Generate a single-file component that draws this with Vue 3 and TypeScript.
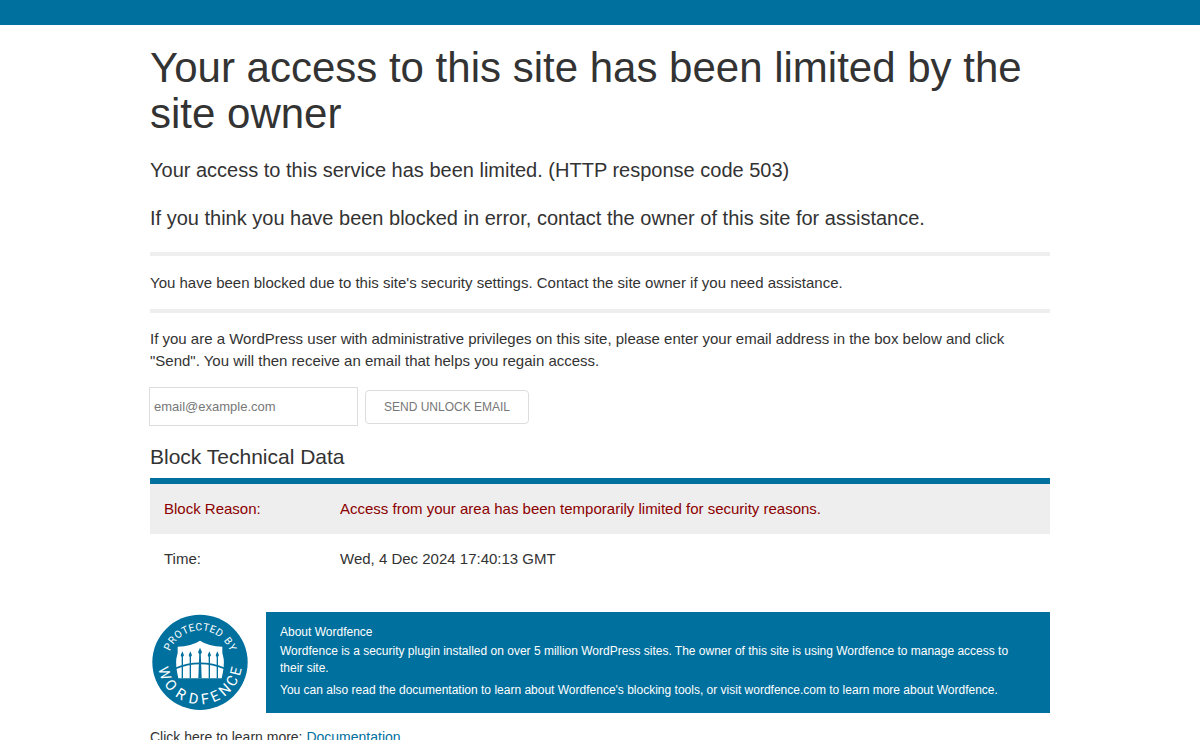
<script setup lang="ts">
import { ref } from 'vue'

interface Letter { char: string; angle: number }
interface Row { label: string; value: string; reason: boolean }

const email = ref<string>('')

const place = (text: string, angles: number[]): Letter[] =>
  angles.map((angle, i) => ({ char: text[i], angle }))

const upper = place('PROTECTEDBY', [-64, -51, -38, -25, -14, -2, 10, 21, 33, 53, 65])
const lower = place('WORDFENCE', [73, 52, 31, 10, -8, -24, -42, -60, -76])

const rows: Row[] = [
  { label: 'Block Reason:', value: 'Access from your area has been temporarily limited for security reasons.', reason: true },
  { label: 'Time:', value: 'Wed, 4 Dec 2024 17:40:13 GMT', reason: false },
]
</script>

<template>
  <div class="page">
    <div class="top-bar"></div>
    <main class="content">
      <h1>Your access to this site has been limited by the site owner</h1>
      <p class="large">Your access to this service has been limited. (HTTP response code 503)</p>
      <p class="large">If you think you have been blocked in error, contact the owner of this site for assistance.</p>
      <p class="notice">You have been blocked due to this site's security settings. Contact the site owner if you need assistance.</p>
      <form @submit.prevent>
        <label for="email">If you are a WordPress user with administrative privileges on this site, please enter your email address in the box below and click "Send". You will then receive an email that helps you regain access.</label>
        <div class="fields">
          <input id="email" v-model="email" type="email" placeholder="email@example.com" />
          <button type="submit">SEND UNLOCK EMAIL</button>
        </div>
      </form>
      <h2>Block Technical Data</h2>
      <table>
        <tbody>
          <tr v-for="row in rows" :key="row.label" :class="{ reason: row.reason }">
            <th scope="row">{{ row.label }}</th>
            <td>{{ row.value }}</td>
          </tr>
        </tbody>
      </table>
      <section class="about">
        <svg class="badge" viewBox="0 0 300 300" role="img" aria-label="Protected by Wordfence">
          <circle cx="150" cy="151" r="143" fill="#00709e" />
          <g class="upper">
            <text v-for="(l, i) in upper" :key="i" x="150" y="55" :transform="`rotate(${l.angle} 150 151)`">{{ l.char }}</text>
          </g>
          <g class="lower">
            <text v-for="(l, i) in lower" :key="i" x="150" y="277" :transform="`rotate(${l.angle} 150 151)`">{{ l.char }}</text>
          </g>
          <path fill="#fff" d="M150 86Q176 103 217 104Q215 122 221 140Q224 160 215 199H85Q76 160 79 140Q85 122 83 104Q124 103 150 86Z" />
          <g fill="none" stroke="#00709e">
            <path stroke-width="4" d="M97 126V199M121 126V199M178 126V199M202 126V199" />
            <path stroke-width="5" d="M74 170Q150 138 226 170" />
          </g>
          <path fill="#00709e" d="M148 118H152L155 199H145ZM97 118L102 130L97 137L92 130ZM121 118L126 130L121 137L116 130ZM150 107L156 121L150 130L144 121ZM178 118L183 130L178 137L173 130ZM202 118L207 130L202 137L197 130Z" />
        </svg>
        <div class="about-box">
          <h3>About Wordfence</h3>
          <p>Wordfence is a security plugin installed on over 5 million WordPress sites. The owner of this site is using Wordfence to manage access to their site.</p>
          <p>You can also read the documentation to learn about Wordfence's blocking tools, or visit wordfence.com to learn more about Wordfence.</p>
        </div>
      </section>
      <p class="more">Click here to learn more: <a href="#documentation">Documentation</a></p>
    </main>
  </div>
</template>

<style>
html { overflow: hidden; }
body { margin: 0; background: #fff; }
</style>

<style scoped>
.page {
  color: #333;
  font: 15px/22px "Liberation Sans", Arial, sans-serif;
}
.top-bar { height: 25px; background: #00709e; }
.content { box-sizing: border-box; max-width: 932px; margin: 0 auto; padding: 20px 16px; }
h1, h2, h3, p { margin: 0; font-weight: 400; }
h1 { font-size: 42px; line-height: 46px; }
.large { font-size: 20px; line-height: 28px; margin-top: 20px; }
h1 + .large { margin-top: 19px; }
.notice {
  margin: 20px 0 15px;
  padding: 16px 0 15px;
  border-top: 4px solid #eee;
  border-bottom: 4px solid #eee;
}
label { display: block; }
.fields { display: flex; align-items: center; gap: 7px; margin-top: 15px; }
input, button { box-sizing: border-box; border: 1px solid #ddd; background: #fff; font-family: inherit; }
input { width: 209px; height: 39px; margin-left: -1px; padding: 0 4px; font-size: 13px; color: #333; }
input::placeholder { color: #777; opacity: 1; }
button { height: 34px; padding: 0 18px; border-radius: 4px; color: #777; font-size: 12px; }
h2 { margin: 17px 0 7px; font-size: 21px; line-height: 28px; }
table { width: 100%; border-collapse: collapse; border-top: 6px solid #00709e; }
th, td { padding: 14px; text-align: left; font-weight: 400; vertical-align: top; }
th { width: 148px; }
.reason { background: #eee; color: #8b0000; }
.about { display: flex; gap: 16px; margin-top: 28px; }
.badge { flex: none; width: 100px; height: 100px; }
.upper, .lower { fill: #fff; text-anchor: middle; font-family: Roboto, sans-serif; }
.upper { font-size: 31px; }
.lower { font-size: 44px; }
.about-box { flex: 1; padding: 9px 20px 14px 14px; background: #00709e; color: #fff; font-size: 12px; line-height: 17px; }
h3 { font-size: 12px; line-height: 22px; }
.about-box p + p { margin-top: 5px; }
.more { margin-top: 13px; font-size: 14px; }
a { color: #00709e; }
</style>
